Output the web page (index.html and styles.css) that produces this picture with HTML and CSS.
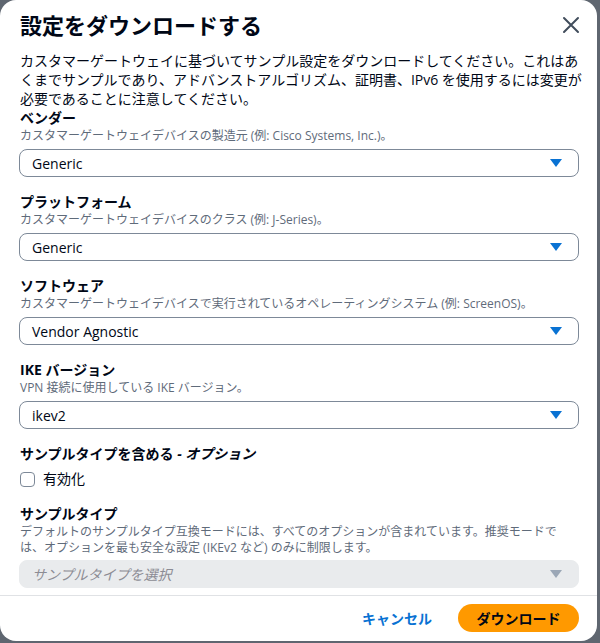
FILE: index.html
```html
<!DOCTYPE html>
<html lang="ja">
<head>
<meta charset="utf-8">
<link rel="stylesheet" href="styles.css">
</head>
<body>
<div class="modal">
  <div class="header">
    <h1 class="title">設定をダウンロードする</h1>
    <button class="close" aria-label="閉じる">
      <svg width="18" height="18" viewBox="0 0 18 18"><path d="M2 2 L16 16 M16 2 L2 16" stroke="#414d5c" stroke-width="2" fill="none" stroke-linecap="round"/></svg>
    </button>
  </div>
  <div class="content">
    <p class="intro">カスタマーゲートウェイに基づいてサンプル設定をダウンロードしてください。これはあくまでサンプルであり、アドバンストアルゴリズム、証明書、IPv6 を使用するには変更が必要であることに注意してください。</p>

    <div class="field">
      <div class="label">ベンダー</div>
      <div class="hint">カスタマーゲートウェイデバイスの製造元 (例: Cisco Systems, Inc.)。</div>
      <div class="select"><span>Generic</span><span class="caret"></span></div>
    </div>

    <div class="field">
      <div class="label">プラットフォーム</div>
      <div class="hint">カスタマーゲートウェイデバイスのクラス (例: J-Series)。</div>
      <div class="select"><span>Generic</span><span class="caret"></span></div>
    </div>

    <div class="field">
      <div class="label">ソフトウェア</div>
      <div class="hint">カスタマーゲートウェイデバイスで実行されているオペレーティングシステム (例: ScreenOS)。</div>
      <div class="select"><span>Vendor Agnostic</span><span class="caret"></span></div>
    </div>

    <div class="field">
      <div class="label">IKE バージョン</div>
      <div class="hint">VPN 接続に使用している IKE バージョン。</div>
      <div class="select"><span>ikev2</span><span class="caret"></span></div>
    </div>

    <div class="field">
      <div class="label">サンプルタイプを含める <i>- オプション</i></div>
      <label class="check"><span class="box"></span><span>有効化</span></label>
    </div>

    <div class="field">
      <div class="label">サンプルタイプ</div>
      <div class="hint two">デフォルトのサンプルタイプ互換モードには、すべてのオプションが含まれています。推奨モードでは、オプションを最も安全な設定 (IKEv2 など) のみに制限します。</div>
      <div class="select disabled"><span class="placeholder">サンプルタイプを選択</span><span class="caret"></span></div>
    </div>
  </div>
  <div class="footer">
    <button class="link">キャンセル</button>
    <button class="primary">ダウンロード</button>
  </div>
</div>
</body>
</html>
```

FILE: styles.css
```css
* { box-sizing: border-box; }
html, body { margin: 0; padding: 0; }
body {
  width: 600px;
  height: 643px;
  background: #5f6670;
  font-family: "Open Sans", "Noto Sans CJK JP", sans-serif;
  color: #000716;
  overflow: hidden;
}
.modal {
  width: 597px;
  height: 641px;
  background: #fff;
  border-radius: 16px;
  display: flex;
  flex-direction: column;
}
.header {
  display: flex;
  justify-content: space-between;
  align-items: center;
  padding: 11px 20px 0 20px;
}
.title {
  margin: 0;
  font-size: 22px;
  line-height: 28px;
  font-weight: 700;
}
.close {
  border: none;
  background: none;
  padding: 0;
  margin-right: -4px;
  width: 20px;
  height: 20px;
  display: flex;
  align-items: center;
  justify-content: center;
}
.content {
  flex: 1;
  padding: 0 18px 0 20px;
}
.intro {
  margin: 12px -8px 0 0;
  font-size: 14px;
  line-height: 19px;
}
.field { margin-bottom: 15px; }
.field:last-child { margin-bottom: 0; }
.label {
  font-size: 14px;
  line-height: 20px;
  font-weight: 700;
}
.hint {
  font-size: 12px;
  line-height: 16px;
  color: #5f6b7a;
}
.hint.two { padding-right: 18px; }
.select {
  margin-top: 5px;
  height: 28px;
  margin-left: -1px;
  border: 1px solid #7d8998;
  border-radius: 8px;
  display: flex;
  align-items: center;
  justify-content: space-between;
  padding: 0 16px 0 12px;
  font-size: 14px;
}
.select.disabled {
  margin-top: 4px;
  background: #e9ebed;
  border-color: #e9ebed;
}
.placeholder {
  color: #8c8c94;
  font-style: italic;
}
.caret {
  width: 0;
  height: 0;
  border-left: 6px solid transparent;
  border-right: 6px solid transparent;
  border-top: 8px solid #0972d3;
}
.disabled .caret { border-top-color: #9ba7b6; }
.check {
  margin-top: 5px;
  display: flex;
  align-items: center;
  gap: 8px;
  font-size: 14px;
  line-height: 20px;
}
.box {
  width: 15px;
  height: 15px;
  border: 1px solid #7d8998;
  border-radius: 4px;
  background: #fff;
}
.footer {
  border-top: 1px solid #e0e2e5;
  height: 44px;
  display: flex;
  justify-content: flex-end;
  align-items: center;
  gap: 6px;
  padding: 0 18px 0 20px;
  margin-bottom: 2px;
}
button {
  font-family: inherit;
  cursor: pointer;
}
.link {
  border: none;
  background: none;
  color: #0972d3;
  font-weight: 700;
  font-size: 14px;
  padding: 4px 20px;
}
.primary {
  border: none;
  background: #ff9900;
  color: #000716;
  font-weight: 700;
  font-size: 14px;
  height: 28px;
  border-radius: 14px;
  padding: 0 18px;
  width: 121px;
}
```
